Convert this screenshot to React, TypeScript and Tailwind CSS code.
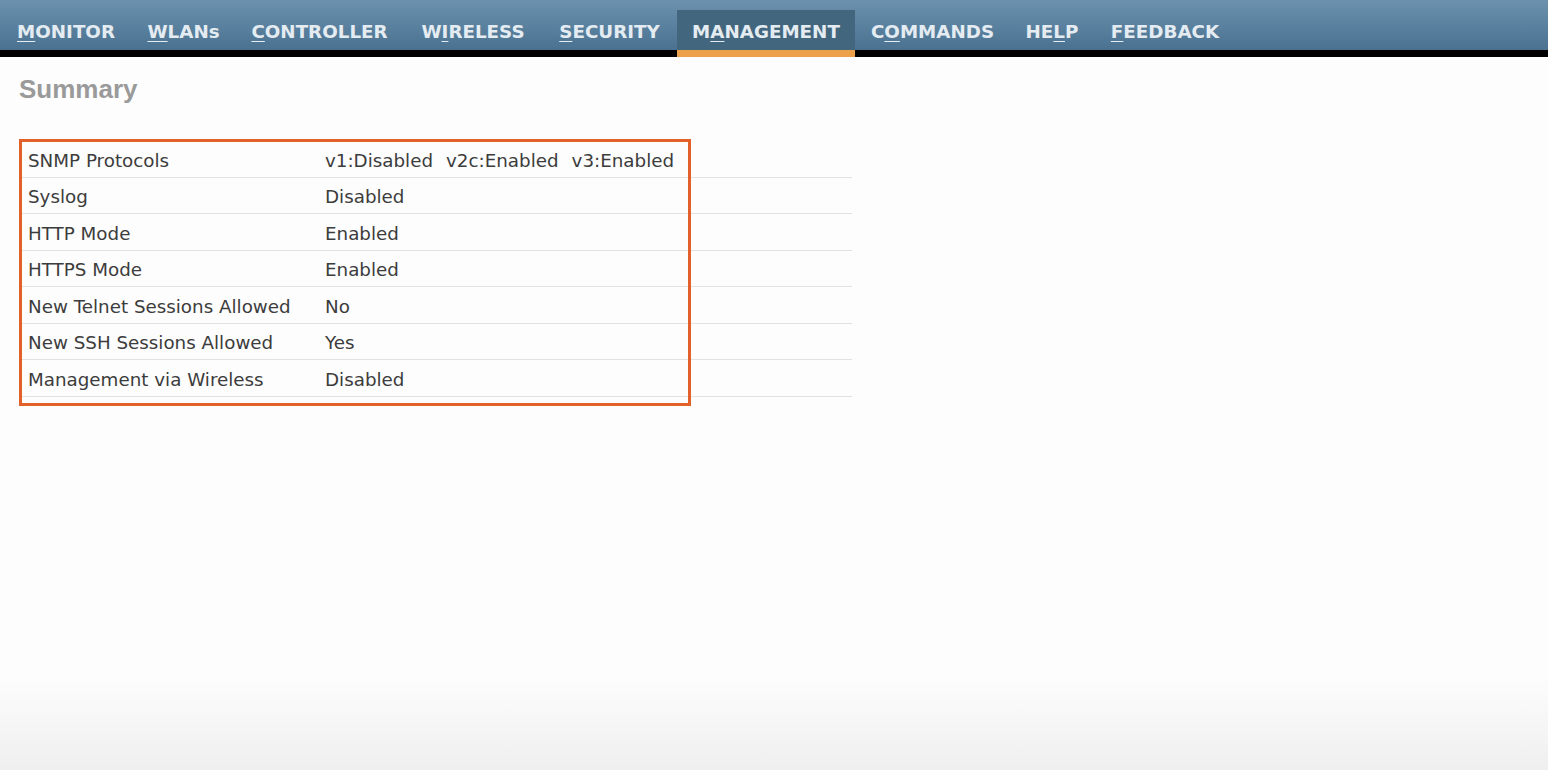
import React from 'react';

type NavItem = { pre: string; key: string; post: string; w: string; active?: boolean };

const navItems: NavItem[] = [
  { pre: '', key: 'M', post: 'ONITOR', w: 'w-[132px]' },
  { pre: '', key: 'W', post: 'LANs', w: 'w-[103px]' },
  { pre: '', key: 'C', post: 'ONTROLLER', w: 'w-[169px]' },
  { pre: 'W', key: 'I', post: 'RELESS', w: 'w-[138px]' },
  { pre: '', key: 'S', post: 'ECURITY', w: 'w-[135px]' },
  { pre: 'M', key: 'A', post: 'NAGEMENT', w: 'w-[178px]', active: true },
  { pre: 'C', key: 'O', post: 'MMANDS', w: 'w-[155px]' },
  { pre: 'HE', key: 'L', post: 'P', w: 'w-[84px]' },
  { pre: '', key: 'F', post: 'EEDBACK', w: 'w-[142px]' },
];

const rows: [string, string[]][] = [
  ['SNMP Protocols', ['v1:Disabled', 'v2c:Enabled', 'v3:Enabled']],
  ['Syslog', ['Disabled']],
  ['HTTP Mode', ['Enabled']],
  ['HTTPS Mode', ['Enabled']],
  ['New Telnet Sessions Allowed', ['No']],
  ['New SSH Sessions Allowed', ['Yes']],
  ['Management via Wireless', ['Disabled']],
];

export default function App() {
  return (
    <div className="flex h-[770px] w-full flex-col overflow-hidden bg-[#fdfdfd] font-['DejaVu_Sans',sans-serif]">
      {/* top menu */}
      <div className="flex h-[57px] shrink-0 items-stretch border-b-[7px] border-black bg-gradient-to-b from-[#6b91ae] to-[#4a7290]">
        {navItems.map((item) => (
          <div
            key={item.pre + item.key + item.post}
            className={
              (item.active ? 'bg-[#43667f] ' : '') +
              'relative mt-[10px] flex shrink-0 items-center justify-center pt-[3px] ' +
              item.w
            }
          >
            <span className="text-[18.3px] font-bold whitespace-nowrap text-[#e4ecf2]">
              {item.pre}
              <u className="underline-offset-[3px]">{item.key}</u>
              {item.post}
            </span>
            {item.active && (
              <div className="absolute right-0 bottom-[-7px] left-0 h-[7px] bg-[#eda04a]" />
            )}
          </div>
        ))}
      </div>

      {/* content */}
      <div className="relative flex-1 bg-gradient-to-b from-[#fdfdfd] from-[87%] to-[#efefef] px-[19px] pt-[17px]">
        <h1 className="font-['Liberation_Sans',sans-serif] text-[26px] leading-[30px] font-bold text-[#9a9a9a]">
          Summary
        </h1>

        <div className="relative mt-[37px] ml-[3px] w-[830px]">
          {rows.map(([label, values]) => (
            <div
              key={label}
              className="flex h-[36.5px] items-center border-b border-[#e2e2e2] pt-[3px] pl-[6px] text-[18.3px] text-[#3c3c3c]"
            >
              <div className="w-[297px] shrink-0">{label}</div>
              <div className="flex gap-[13px]">
                {values.map((v) => (
                  <span key={v}>{v}</span>
                ))}
              </div>
            </div>
          ))}
          {/* highlight box */}
          <div className="pointer-events-none absolute top-[-2px] left-[-3px] h-[267px] w-[672px] border-[3px] border-[#e2612b]" />
        </div>
      </div>
    </div>
  );
}
